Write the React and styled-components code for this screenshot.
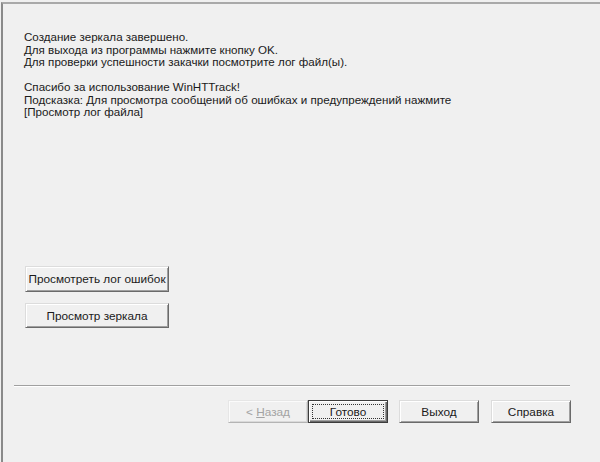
import React from "react";
import styled, { createGlobalStyle } from "styled-components";

const Global = createGlobalStyle`
  html, body { margin: 0; padding: 0; background: #f0f0f0; }
  body { font-family: "Liberation Sans", Arial, sans-serif; }
`;

const Frame = styled.div`
  width: 600px;
  height: 462px;
  box-sizing: border-box;
  padding: 2px 0 0 1px;
  background: #f0f0f0;
  overflow: hidden;
`;

const Window = styled.div`
  height: 100%;
  box-sizing: border-box;
  border-top: 2px solid #a9a9a9;
  border-left: 2px solid #8a8a8a;
  display: flex;
  flex-direction: column;
`;

const Body = styled.div`
  flex: 1;
  display: flex;
  flex-direction: column;
  padding: 27px 0 0 21px;
`;

const Message = styled.p`
  margin: 0 0 12.5px 0;
  font-size: 11.6px;
  line-height: 12.5px;
  color: #1a1a1a;
`;

const SideButtons = styled.div`
  display: flex;
  flex-direction: column;
  gap: 11px;
  margin-top: 135px;
  margin-left: 1px;
`;

const Button = styled.button`
  box-sizing: border-box;
  width: ${(p) => p.$w || 80}px;
  height: ${(p) => p.$h || 23}px;
  padding: 0;
  position: relative;
  font-family: "Liberation Sans", Arial, sans-serif;
  font-size: 11.8px;
  color: ${(p) => (p.disabled ? "#a3a3a3" : "#1a1a1a")};
  background: #f0f0f0;
  border: 1px solid;
  border-color: ${(p) =>
    p.$default ? "#3c3c3c" : p.disabled ? "#e6e6e6 #b4b4b4 #b4b4b4 #e6e6e6" : "#dcdcdc #6a6a6a #6a6a6a #dcdcdc"};
  box-shadow: ${(p) =>
    p.$default
      ? "inset 1px 1px #fff, inset -1px -1px #6a6a6a, inset -2px -2px #a0a0a0"
      : p.disabled
      ? "inset 1px 1px #fbfbfb, inset -1px -1px #dadada"
      : "inset 1px 1px #fff, inset -1px -1px #a0a0a0"};
  cursor: default;
  text-align: center;
`;

const FocusRing = styled.span`
  position: absolute;
  inset: 3px;
  border: 1px dotted #333;
  pointer-events: none;
`;

const Accel = styled.span`
  text-decoration: underline;
`;

const Separator = styled.div`
  margin: 0 30px 0 11px;
  height: 0;
  border-top: 1px solid #a0a0a0;
  border-bottom: 1px solid #ffffff;
`;

const Footer = styled.div`
  display: flex;
  justify-content: flex-end;
  padding: 13px 29px 39px 0;
`;

const Pair = styled.div`
  display: flex;
  margin-right: 11px;
`;

const Gap = styled.div`
  width: 12px;
`;

export default function App() {
  return (
    <Frame>
      <Global />
      <Window>
        <Body>
          <Message>
            Создание зеркала завершено.
            <br />
            Для выхода из программы нажмите кнопку OK.
            <br />
            Для проверки успешности закачки посмотрите лог файл(ы).
          </Message>
          <Message>
            Спасибо за использование WinHTTrack!
            <br />
            Подсказка: Для просмотра сообщений об ошибках и предупреждений нажмите
            <br />
            [Просмотр лог файла]
          </Message>
          <SideButtons>
            <Button $w={144} $h={26}>Просмотреть лог ошибок</Button>
            <Button $w={144} $h={25}>Просмотр зеркала</Button>
          </SideButtons>
        </Body>
        <Separator />
        <Footer>
          <Pair>
            <Button disabled $w={80}>
              &lt; <Accel>Н</Accel>азад
            </Button>
            <Button $default $w={80}>
              Готово
              <FocusRing />
            </Button>
          </Pair>
          <Button $w={80}>Выход</Button>
          <Gap />
          <Button $w={80}>Справка</Button>
        </Footer>
      </Window>
    </Frame>
  );
}
